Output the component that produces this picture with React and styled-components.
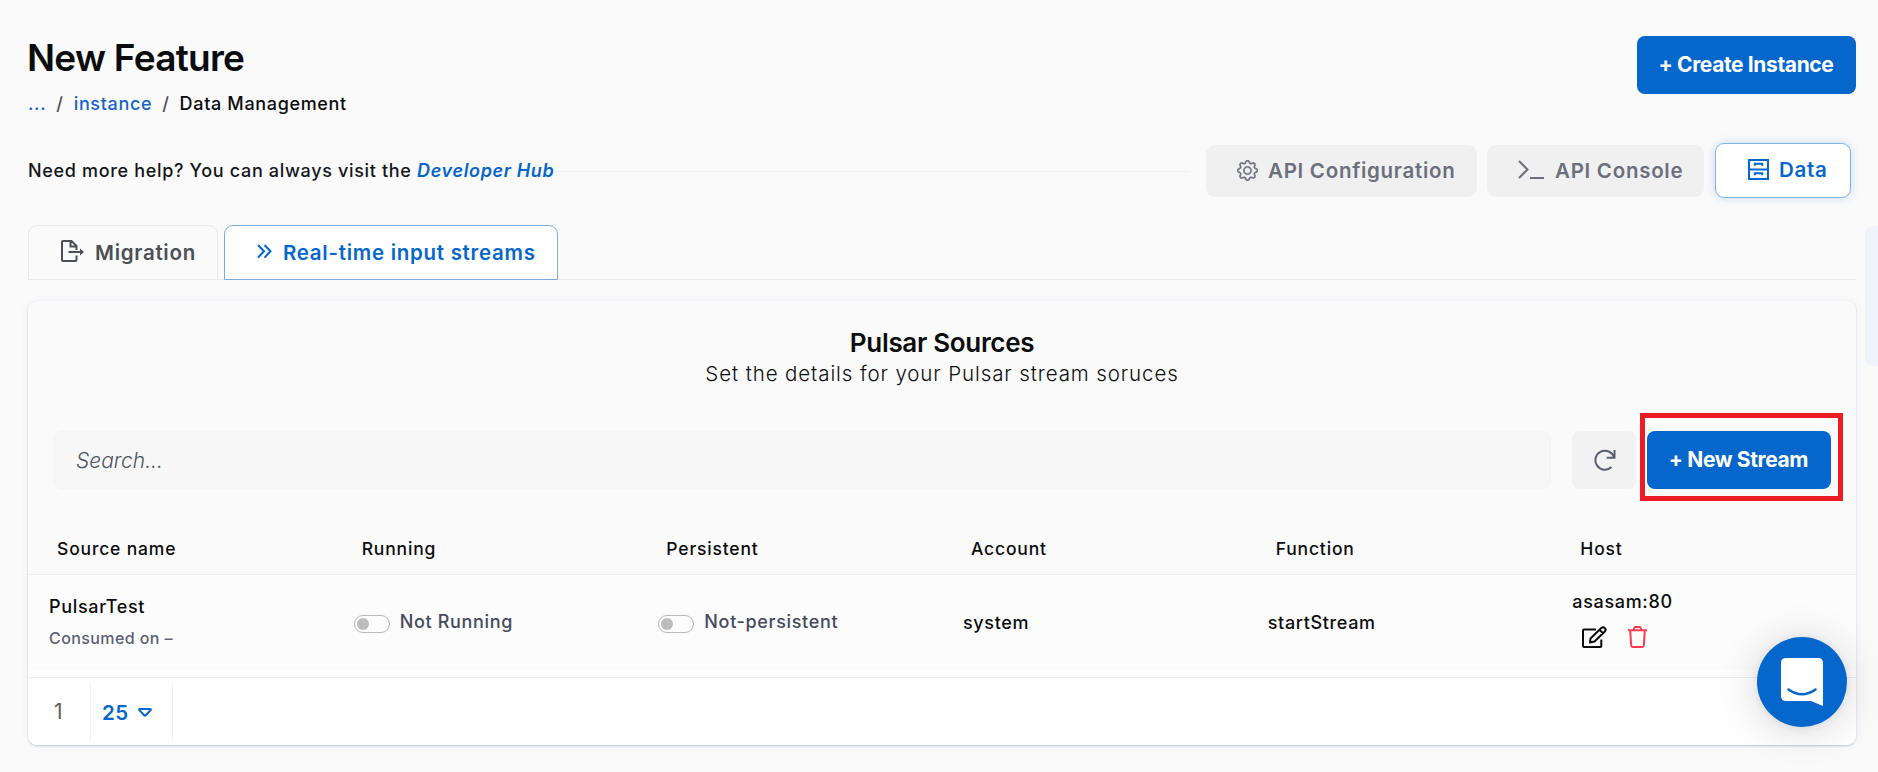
import React from 'react';
import styled, { createGlobalStyle } from 'styled-components';
import { BsGear } from 'react-icons/bs';

const BLUE = '#0566cc';

const GlobalStyle = createGlobalStyle`
  * { box-sizing: border-box; }
  body { margin: 0; background: #fafafa; font-family: Inter, "Liberation Sans", sans-serif; color: #0b0c0e; }
  button, input { font-family: inherit; }
`;

const Page = styled.div`
  position: relative;
  width: 1878px;
  height: 772px;
  padding: 36px 22px 0 28px;
  overflow: hidden;
`;
const Header = styled.header`
  display: flex;
  justify-content: space-between;
  align-items: flex-start;
  height: 90px;
`;
const Title = styled.h1`
  margin: 0 0 0 -1px;
  font-size: 37px;
  line-height: 44px;
  font-weight: 600;
  letter-spacing: -0.74px;
`;
const Crumbs = styled.nav`
  display: flex;
  margin-top: 13px;
  font-size: 18px;
  line-height: 22px;
  font-weight: 500;
  letter-spacing: 0.66px;
`;
const Crumb = styled.span`
  color: ${p => p.$link ? '#1763c6' : '#0b0c0e'};
  margin-left: ${p => p.$gap || 0}px;
`;
const Slash = styled.span`
  margin-left: 10px;
  color: #4b4f58;
`;
const PrimaryButton = styled.button`
  width: ${p => p.$width}px;
  height: 58px;
  border: 0;
  border-radius: 8px;
  padding: 0 1px 2px 0;
  background: ${BLUE};
  color: #fff;
  font-size: 21px;
  font-weight: 700;
  letter-spacing: -0.38px;
`;
const HelpRow = styled.div`
  display: flex;
  align-items: center;
  height: 56px;
  margin-top: 17px;
  padding-right: 5px;
`;
const HelpText = styled.div`
  margin-top: -2px;
  font-size: 18px;
  font-weight: 500;
  letter-spacing: 0.67px;
  white-space: nowrap;
  color: #14161a;
`;
const HubLink = styled.a`
  color: ${BLUE};
  font-style: italic;
  font-weight: 600;
  letter-spacing: 0.66px;
`;
const Rule = styled.div`
  flex: 1;
  height: 1px;
  margin-right: 18px;
  background: #f1f1f1;
`;
const Tab = styled.div`
  display: flex;
  align-items: center;
  font-size: 20.5px;
  font-weight: 600;
  letter-spacing: 0.72px;
  white-space: nowrap;
`;
const ModeTab = styled(Tab)`
  width: ${p => p.$width}px;
  height: ${p => p.$active ? 55 : 52}px;
  margin-top: ${p => p.$active ? -1 : 0}px;
  padding: 0 0 2px ${p => p.$pad}px;
  gap: ${p => p.$gap}px;
  margin-left: ${p => p.$left || 0}px;
  border-radius: 9px;
  color: ${p => p.$active ? BLUE : '#6b6f7c'};
  background: ${p => p.$active ? '#fff' : '#f0f0f0'};
  border: ${p => p.$active ? '1px solid #80b3e6' : '0'};
  box-shadow: ${p => p.$active ? '0 0 10px rgba(5,102,204,.22)' : 'none'};
`;
const PageTabs = styled.div`
  display: flex;
  align-items: flex-end;
  gap: 6px;
  height: 55px;
  margin-top: 26px;
  box-shadow: inset 0 -1px #e8e9ea;
`;
const PageTab = styled(Tab)`
  width: ${p => p.$width}px;
  height: 55px;
  padding-left: 32px;
  gap: ${p => p.$gap}px;
  border: 1px solid ${p => p.$active ? '#79addf' : '#e8e9ea'};
  border-radius: 9px 9px 0 0;
  background: ${p => p.$active ? '#fefefe' : '#fafafa'};
  color: ${p => p.$active ? BLUE : '#4b4f56'};
  & svg { margin-top: -3px; }
`;
const Card = styled.section`
  display: flex;
  flex-direction: column;
  height: 444px;
  margin-top: 21px;
  border-radius: 9px;
  background: #fafafa;
  box-shadow: 0 1px 2px rgba(70,90,150,.3), 0 0 10px rgba(70,80,180,.06);
  overflow: hidden;
`;
const CardTitle = styled.h2`
  margin: 25px 0 0;
  text-align: center;
  font-size: 26px;
  line-height: 34px;
  font-weight: 600;
  letter-spacing: -0.32px;
`;
const CardSubtitle = styled.p`
  margin: 0;
  text-align: center;
  font-size: 20.5px;
  line-height: 28px;
  font-weight: 300;
  letter-spacing: 0.9px;
`;
const Toolbar = styled.div`
  display: flex;
  margin: 43px 25px 0 26px;
`;
const Search = styled.input`
  width: 1497px;
  height: 58px;
  padding: 0 21px;
  border: 1px solid #f4f4f4;
  border-radius: 8px;
  background: #f7f7f7;
  font-size: 21px;
  letter-spacing: 0;
  &::placeholder { color: #50545e; font-style: italic; font-weight: 300; opacity: 1; }
`;
const IconButton = styled.button`
  display: grid;
  place-items: center;
  width: 64px;
  height: 58px;
  margin: 0 11px 0 21px;
  padding: 0 0 0 2px;
  border: 0;
  border-radius: 8px;
  background: #f2f2f2;
  color: #5a5f70;
`;
const Highlighted = styled.div`
  position: relative;
  &::after {
    content: '';
    position: absolute;
    inset: -18px -12px -12px -7px;
    border: 5px solid #ed1c24;
  }
`;
const Row = styled.div`
  display: grid;
  grid-template-columns: repeat(6, 1fr);
  font-weight: 500;
  flex: none;
`;
const HeadRow = styled(Row)`
  height: 86px;
  align-items: end;
  padding-bottom: 14px;
  border-bottom: 1px solid #f1f1f2;
  font-size: 17.5px;
  letter-spacing: 0.83px;
`;
const HeadCell = styled.div`
  padding-left: 29px;
  line-height: 22px;
`;
const BodyRow = styled(Row)`
  height: 95px;
  background: #fcfcfc;
  font-size: 18px;
  letter-spacing: 0.66px;
  align-items: center;
`;
const Cell = styled.div`
  padding-left: 21px;
  padding-bottom: ${p => p.$lift || 0}px;
  line-height: 22px;
`;
const SubText = styled.div`
  margin-top: 9px;
  font-size: 16px;
  letter-spacing: 0.41px;
  color: #5c6173;
`;
const ToggleCell = styled(Cell)`
  display: flex;
  align-items: center;
  gap: 10px;
  padding-bottom: 2px;
  color: #454a5e;
`;
const Toggle = styled.span`
  width: 36px;
  height: 18px;
  margin-top: 5px;
  padding: 2px;
  border: 1px solid #b9b9b9;
  border-radius: 9px;
  &::before {
    content: '';
    display: block;
    width: 12px;
    height: 12px;
    border-radius: 50%;
    background: #bcbcbc;
  }
`;
const Actions = styled.div`
  display: flex;
  align-items: center;
  gap: 21px;
  margin: 13px 0 0 10px;
`;
const Footer = styled.footer`
  display: flex;
  flex: 1;
  padding: 6px 0 7px;
  margin-top: 7px;
  border-top: 1px solid #eeeef0;
`;
const Base = styled.div`
  display: flex;
  flex-direction: column;
  flex: 1;
  background: #fefefe;
`;
const PageNumber = styled.div`
  width: 63px;
  padding-left: 26px;
  line-height: 56px;
  font-size: 21px;
  color: #606060;
  border-right: 1px solid #f2f2f2;
`;
const PageSize = styled.div`
  display: flex;
  align-items: center;
  gap: 10px;
  width: 82px;
  padding-left: 11px;
  font-size: 20.5px;
  font-weight: 600;
  letter-spacing: 0.4px;
  color: ${BLUE};
  border-right: 1px solid #f2f2f2;
`;
const SidePanel = styled.aside`
  position: absolute;
  left: 1865px;
  top: 226px;
  width: 30px;
  height: 140px;
  border-radius: 8px;
  background: #f0f3f9;
`;
const Chat = styled.button`
  position: absolute;
  left: 1757px;
  top: 637px;
  width: 90px;
  height: 90px;
  padding: 0;
  border: 0;
  border-radius: 50%;
  background: ${BLUE};
  box-shadow: 0 1px 8px rgba(0,0,0,.07), 0 3px 40px rgba(0,0,0,.16);
  & svg { display: block; }
`;

const line = { fill: 'none', stroke: 'currentColor', strokeWidth: 2, strokeLinejoin: 'miter' };

const Gear = styled(BsGear)`
  width: 21px;
  height: 21px;
  stroke: currentColor;
  stroke-width: 0.3px;
`;
const Prompt = () => (
  <svg width="26" height="20" viewBox="0 0 26 20" {...line}>
    <path d="M1 1l8.500 8.500L1 18" /><path d="M12 18H26" />
  </svg>
);
const Drawers = () => (
  <svg width="21" height="21" viewBox="0 0 21 21" {...line}>
    <path d="M1 1h19v19H1zM1 10.500h19M6.800 6.800V4.700h7.400v2.100M6.800 16.300v-2.100h7.400v2.100" />
  </svg>
);
const Export = () => (
  <svg width="24" height="22" viewBox="0 0 24 22" {...line}>
    <path d="M15.500 10V6L10.500 1H2Q1 1 1 2v18q0 1 1 1h12.500q1 0 1-1v-4.500M9.500 1v5.500h6M7.500 12H21" />
    <path d="M19 8.500l4 3.500-4 3.500z" fill="currentColor" stroke="none" />
  </svg>
);
const Chevrons = () => (
  <svg width="15" height="15" viewBox="0 0 15 15" {...line}>
    <path d="M1 1l6 6.300-6 6.300M7.500 1l6 6.300-6 6.300" />
  </svg>
);
const Refresh = () => (
  <svg width="22" height="22" viewBox="0 0 22 22" {...line}>
    <path d="M20.500 1v7.800h-7.800M20 8.500A9.500 9.500 0 1 0 17.500 18" />
  </svg>
);
const Edit = () => (
  <svg width="25" height="22" viewBox="0 0 25 22" {...line} strokeLinejoin="round">
    <path d="M14 3.500H2Q1 3.500 1 4.500V20q0 1 1 1h16.300q1 0 1-1v-6.500" />
    <path d="M8.500 12.500L19.300 2Q21 .500 22.700 2T22.800 5.500L12.500 15.500l-4.500 1zM17.500 3.800l3.700 3.700" />
  </svg>
);
const Trash = () => (
  <svg width="19" height="22" viewBox="0 0 19 22" {...line} stroke="#fb3b4e">
    <path d="M0 4.200h19M5.500 4l1-2.500Q6.700 1 7.300 1h4.400q.600 0 .8.500L13.500 4M2.200 4.500l1 15Q3.300 21 4.700 21h9.600q1.400 0 1.500-1.500l1-15" />
  </svg>
);
const Caret = () => (
  <svg width="14" height="9" viewBox="0 0 14 9" {...line} strokeLinejoin="round">
    <path d="M1.200 1.900Q.900 1 2 1h10q1.100 0 .8.900L7.800 7.200q-.800.800-1.600 0z" />
  </svg>
);
const ChatIcon = () => (
  <svg width="90" height="90" viewBox="0 0 90 90">
    <path fill="#fff" d="M29 21h32q5 0 5 5v43l-12-5H29q-5 0-5-5V26q0-5 5-5z" />
    <path d="M31.500 52.500q13.500 9.500 27 0" fill="none" stroke={BLUE} strokeWidth="2.600" strokeLinecap="round" />
  </svg>
);

const columns = ['Source name', 'Running', 'Persistent', 'Account', 'Function', 'Host'];

export default function App() {
  return (
    <Page>
      <GlobalStyle />
      <Header>
        <div>
          <Title>New Feature</Title>
          <Crumbs>
            <Crumb $link>...</Crumb><Slash>/</Slash>
            <Crumb $link $gap={10}>instance</Crumb><Slash>/</Slash>
            <Crumb $gap={10}>Data Management</Crumb>
          </Crumbs>
        </div>
        <PrimaryButton $width={219}>+ Create Instance</PrimaryButton>
      </Header>
      <HelpRow>
        <HelpText>Need more help? You can always visit the <HubLink>Developer Hub</HubLink></HelpText>
        <Rule />
        <ModeTab $width={271} $pad={31} $gap={10}><Gear />API Configuration</ModeTab>
        <ModeTab $width={217} $pad={31} $gap={11} $left={10}><Prompt />API Console</ModeTab>
        <ModeTab $width={136} $pad={32} $gap={10} $left={11} $active><Drawers />Data</ModeTab>
      </HelpRow>
      <PageTabs>
        <PageTab $width={190} $gap={10}><Export />Migration</PageTab>
        <PageTab $width={334} $gap={11} $active><Chevrons />Real-time input streams</PageTab>
      </PageTabs>
      <Card>
        <CardTitle>Pulsar Sources</CardTitle>
        <CardSubtitle>Set the details for your Pulsar stream soruces</CardSubtitle>
        <Toolbar>
          <Search placeholder="Search..." />
          <IconButton><Refresh /></IconButton>
          <Highlighted><PrimaryButton $width={184}>+ New Stream</PrimaryButton></Highlighted>
        </Toolbar>
        <HeadRow>{columns.map(c => <HeadCell key={c}>{c}</HeadCell>)}</HeadRow>
        <BodyRow>
          <Cell>PulsarTest<SubText>Consumed on –</SubText></Cell>
          <ToggleCell><Toggle />Not Running</ToggleCell>
          <ToggleCell><Toggle />Not-persistent</ToggleCell>
          <Cell>system</Cell>
          <Cell>startStream</Cell>
          <Cell $lift={7}>asasam:80<Actions><Edit /><Trash /></Actions></Cell>
        </BodyRow>
        <Base>
          <Footer>
            <PageNumber>1</PageNumber>
            <PageSize>25<Caret /></PageSize>
          </Footer>
        </Base>
      </Card>
      <SidePanel />
      <Chat><ChatIcon /></Chat>
    </Page>
  );
}
